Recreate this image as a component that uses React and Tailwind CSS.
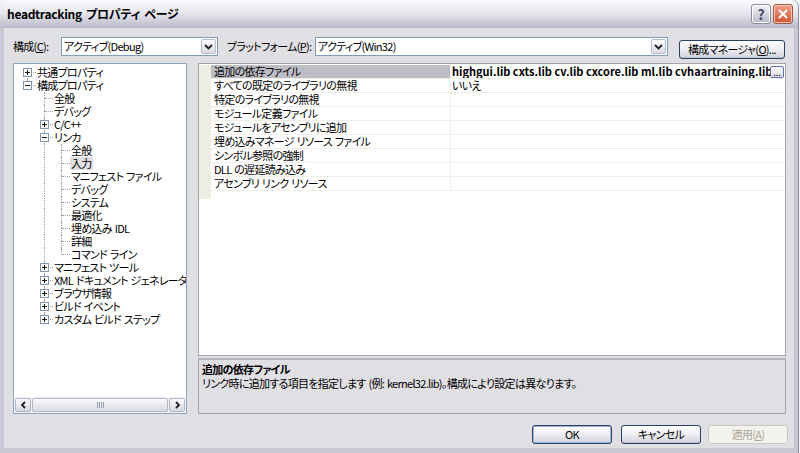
import React from 'react';

// Property page dialog, XP silver look

const TREE = [
  { t: '共通プロパティ', d: 0, box: '+', first: true, g: [] },
  { t: '構成プロパティ', d: 0, box: '-', last: true, g: [] },
  { t: '全般', d: 1, g: [false] },
  { t: 'デバッグ', d: 1, g: [false] },
  { t: 'C/C++', d: 1, box: '+', g: [false] },
  { t: 'リンカ', d: 1, box: '-', g: [false] },
  { t: '全般', d: 2, g: [false, true] },
  { t: '入力', d: 2, g: [false, true], sel: true },
  { t: 'マニフェスト ファイル', d: 2, g: [false, true] },
  { t: 'デバッグ', d: 2, g: [false, true] },
  { t: 'システム', d: 2, g: [false, true] },
  { t: '最適化', d: 2, g: [false, true] },
  { t: '埋め込み IDL', d: 2, g: [false, true] },
  { t: '詳細', d: 2, g: [false, true] },
  { t: 'コマンド ライン', d: 2, g: [false, true], last: true },
  { t: 'マニフェスト ツール', d: 1, box: '+', g: [false] },
  { t: 'XML ドキュメント ジェネレータ', d: 1, box: '+', g: [false] },
  { t: 'ブラウザ情報', d: 1, box: '+', g: [false] },
  { t: 'ビルド イベント', d: 1, box: '+', g: [false] },
  { t: 'カスタム ビルド ステップ', d: 1, box: '+', g: [false], last: true },
];

const PROPS = [
  { name: '追加の依存ファイル', value: 'highgui.lib cxts.lib cv.lib cxcore.lib ml.lib cvhaartraining.lib', sel: true },
  { name: 'すべての既定のライブラリの無視', value: 'いいえ' },
  { name: '特定のライブラリの無視', value: '' },
  { name: 'モジュール定義ファイル', value: '' },
  { name: 'モジュールをアセンブリに追加', value: '' },
  { name: '埋め込みマネージ リソース ファイル', value: '' },
  { name: 'シンボル参照の強制', value: '' },
  { name: 'DLL の遅延読み込み', value: '' },
  { name: 'アセンブリ リンク リソース', value: '' },
];

const JP = 'text-[11px] tracking-[-0.7px] [word-spacing:1px] whitespace-nowrap';

function ExpandBox({ open }) {
  return (
    <svg width="9" height="9" className="absolute left-[4px] top-[2px]">
      <rect x="0.5" y="0.5" width="8" height="8" fill="#fbfbf8" stroke="#8296ac" />
      <path d="M2 4.5h5" stroke="#1a1a1a" />
      {!open && <path d="M4.5 2v5" stroke="#1a1a1a" />}
    </svg>
  );
}

function TreeRow({ item }) {
  return (
    <div className="flex h-[13px] items-stretch whitespace-nowrap">
      {item.g.map((line, i) => (
        <div key={i} className="relative w-[17px] shrink-0">
          {line && <div className="absolute left-[8px] top-0 bottom-0 border-l border-dotted border-[#a0a0a0]" />}
        </div>
      ))}
      <div className="relative w-[17px] shrink-0">
        {!item.first && <div className="absolute left-[8px] top-0 h-[6px] border-l border-dotted border-[#a0a0a0]" />}
        {!item.last && <div className="absolute left-[8px] top-[6px] bottom-0 border-l border-dotted border-[#a0a0a0]" />}
        <div className="absolute left-[9px] right-0 top-[6px] border-t border-dotted border-[#a0a0a0]" />
        {item.box && <ExpandBox open={item.box === '-'} />}
      </div>
      <span className={`px-[1px] leading-[13px] ${JP} ${item.sel ? 'bg-[#e0dfe3]' : ''}`}>{item.t}</span>
    </div>
  );
}

function Chevron({ dir }) {
  const d = dir === 'left' ? 'M5 1L2 4l3 3' : dir === 'right' ? 'M2 1l3 3-3 3' : 'M1 2l3.5 3.5L8 2';
  const w = dir === 'down' ? 9 : 7;
  return (
    <svg width={w} height="8" viewBox={`0 0 ${w} 8`}>
      <path d={d} fill="none" stroke="#1e1e28" strokeWidth="1.8" />
    </svg>
  );
}

function Combo({ text, width }) {
  return (
    <div className={`${width} h-[19px] shrink-0 bg-white border border-[#7f9db9] flex items-center`}>
      <span className={`flex-1 pl-[2px] leading-[17px] overflow-hidden ${JP}`}>{text}</span>
      <div className="w-[15px] h-[15px] mr-[1px] rounded-[2px] border border-[#b4bccc] bg-linear-to-b from-white to-[#d9dae4] flex items-center justify-center">
        <Chevron dir="down" />
      </div>
    </div>
  );
}

function ScrollBtn({ dir }) {
  return (
    <div className="w-[16px] h-[14px] rounded-[2px] border border-[#b3b7c8] bg-linear-to-b from-[#fbfbfd] to-[#d6d7e2] flex items-center justify-center">
      <Chevron dir={dir} />
    </div>
  );
}

function Button({ children, def, disabled, className = 'w-[80px]' }) {
  if (disabled) {
    return (
      <div className={`h-[19px] shrink-0 rounded-[3px] border border-[#cac8bf] bg-[#f3f2ee] text-[#aca899] flex items-center justify-center leading-none ${JP} ${className}`}>
        {children}
      </div>
    );
  }
  return (
    <div
      className={`h-[19px] shrink-0 rounded-[3px] border border-[#2b3f66] bg-linear-to-b from-white via-[#eeeef3] to-[#d2d2dd] flex items-center justify-center leading-none ${JP} ${def ? 'shadow-[inset_0_0_0_1px_#9bb6e6]' : 'shadow-[inset_0_-1px_0_#c0c0cc]'} ${className}`}
    >
      {children}
    </div>
  );
}

export default function App() {
  return (
    <div className="w-[800px] h-[453px] overflow-hidden bg-[#f4f4f6] font-['Noto_Sans_CJK_JP',sans-serif] [font-feature-settings:'palt'] text-black">
      <div className="w-[799px] h-[453px] flex flex-col rounded-t-[7px] bg-[#c8c8d4] border-r border-[#8c8ca0]">
        {/* title bar */}
        <div className="h-[28px] shrink-0 flex items-center rounded-t-[7px] bg-linear-to-b from-[#fbfbfd] via-[#e4e4ec] to-[#b9b9c9] pl-[7px] pr-[5px]">
          <span className="flex-1 text-[12px] tracking-[-0.3px] [word-spacing:2px] font-bold leading-none whitespace-nowrap">headtracking プロパティ ページ</span>
          <div className="w-[20px] h-[20px] rounded-[3px] border border-[#8a8aa0] bg-linear-to-b from-[#f6f6fa] to-[#b6b6ca] shadow-[inset_0_0_0_1px_#ffffff] flex items-center justify-center text-[14px] font-bold text-[#4a4a68] leading-none">
            ?
          </div>
          <div className="w-[20px] h-[20px] ml-[2px] rounded-[3px] border border-[#a2573f] bg-linear-to-b from-[#f0a088] to-[#d2502f] shadow-[inset_0_0_0_1px_#f8c8b8] flex items-center justify-center">
            <svg width="12" height="12" viewBox="0 0 12 12">
              <path d="M2 2l8 8M10 2l-8 8" stroke="#fff" strokeWidth="2" />
            </svg>
          </div>
        </div>

        {/* client area */}
        <div className="flex-1 min-h-0 ml-[4px] mr-[4px] mb-[5px] bg-[#e0dfe3] flex flex-col pt-[9px]">
          {/* config row */}
          <div className="flex items-start h-[22px] shrink-0 pl-[9px]">
            <span className={`w-[48px] leading-[19px] ${JP}`}>構成(<u>C</u>):</span>
            <Combo text="アクティブ(Debug)" width="w-[157px]" />
            <span className={`ml-[9px] w-[88px] leading-[19px] ${JP}`}>プラットフォーム(<u>P</u>):</span>
            <Combo text="アクティブ(Win32)" width="w-[353px]" />
            <Button className="ml-[11px] mt-[3px] w-[106px]">構成マネージャ(<u>O</u>)...</Button>
          </div>

          {/* main area */}
          <div className="flex mt-[4px] pl-[9px] h-[351px] shrink-0">
            {/* tree */}
            <div className="w-[174px] h-full border border-[#8fa4bd] bg-white flex flex-col">
              <div className="flex-1 overflow-hidden pt-[2px] pl-[5px]">
                {TREE.map((item, i) => (
                  <TreeRow key={i} item={item} />
                ))}
              </div>
              <div className="h-[16px] flex items-center gap-[1px] px-[1px] bg-[#f3f3f5]">
                <ScrollBtn dir="left" />
                <div className="flex-1 h-[14px] rounded-[2px] border border-[#b3b7c8] bg-linear-to-b from-[#fbfbfd] to-[#d9dae4] flex items-center justify-center">
                  <div className="flex gap-[1px]">
                    <div className="w-[1px] h-[6px] bg-[#9a9eb0]" />
                    <div className="w-[1px] h-[6px] bg-[#9a9eb0]" />
                    <div className="w-[1px] h-[6px] bg-[#9a9eb0]" />
                    <div className="w-[1px] h-[6px] bg-[#9a9eb0]" />
                  </div>
                </div>
                <ScrollBtn dir="right" />
              </div>
            </div>

            {/* grid + description */}
            <div className="ml-[11px] w-[588px] h-full flex flex-col">
              <div className="h-[293px] shrink-0 border border-[#a3a3a8] bg-white pt-[1px]">
                {PROPS.map((p, i) => (
                  <div key={i} className="flex h-[14px] leading-[13px]">
                    <div className="w-[12px] shrink-0 bg-[#eeede2]" />
                    <div className={`w-[239px] shrink-0 pl-[3px] border-b border-[#f0efe7] overflow-hidden ${JP} ${p.sel ? 'bg-[#bdbdc6]' : ''}`}>
                      {p.name}
                    </div>
                    <div className="flex-1 flex min-w-0 border-l border-b border-[#f0efe7]">
                      <span className={`flex-1 pl-[1px] whitespace-nowrap overflow-hidden ${p.sel ? 'font-bold text-[11px]' : JP}`}>{p.value}</span>
                      {p.sel && (
                        <div className="w-[14px] h-[12px] mr-[1px] mt-[1px] rounded-[2px] border border-[#5a75a8] bg-linear-to-b from-white to-[#d9dae4] text-[9px] leading-[8px] flex items-end justify-center">
                          ...
                        </div>
                      )}
                    </div>
                  </div>
                ))}
                <div className="flex h-[8px]">
                  <div className="w-[12px] bg-[#eeede2]" />
                </div>
              </div>
              <div className="mt-[2px] flex-1 border border-[#a3a3a8] border-t-[2px] border-t-[#b4b4bb] bg-[#e0dfe3] pl-[3px] pt-[2px] leading-[14px]">
                <div className={`font-bold ${JP}`}>追加の依存ファイル</div>
                <div className={JP}>リンク時に追加する項目を指定します (例: kernel32.lib)。構成により設定は異なります。</div>
              </div>
            </div>
          </div>

          {/* buttons */}
          <div className="flex justify-end pr-[6px] mt-[11px]">
            <Button def>OK</Button>
            <Button className="ml-[9px] w-[80px]">キャンセル</Button>
            <Button disabled className="ml-[7px] w-[80px]">適用(<u>A</u>)</Button>
          </div>
        </div>
      </div>
    </div>
  );
}
